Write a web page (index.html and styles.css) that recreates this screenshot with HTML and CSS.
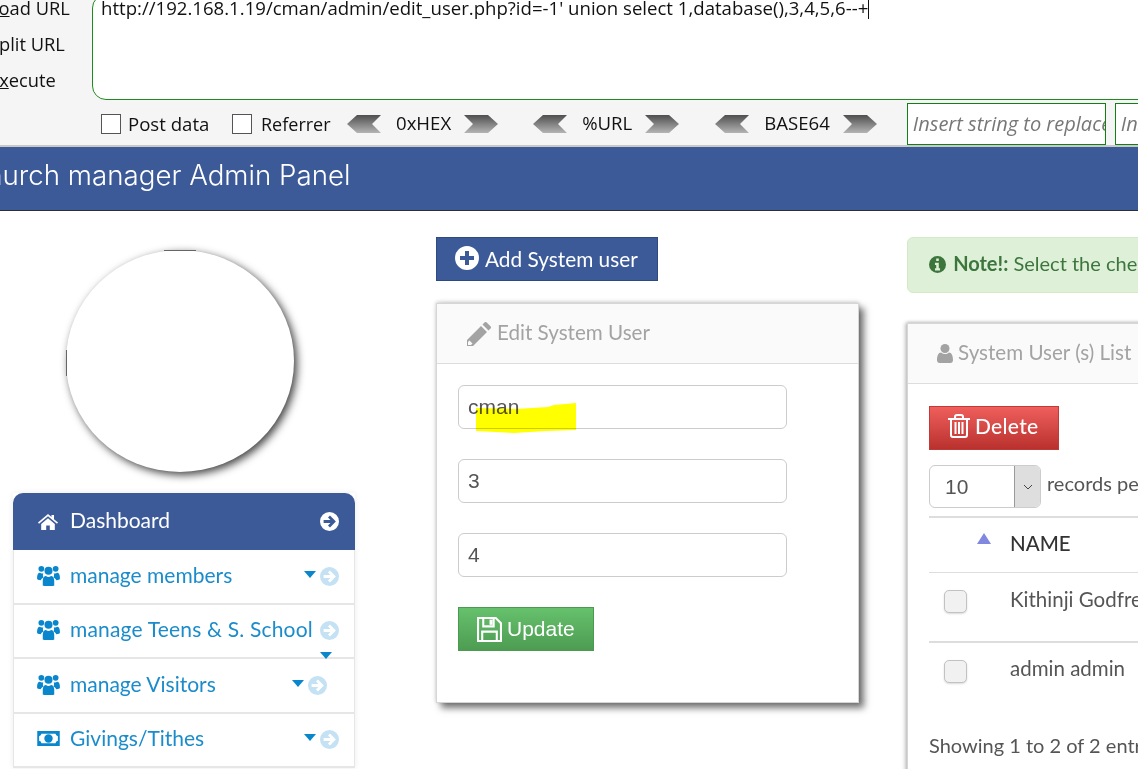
FILE: index.html
```html
<!DOCTYPE html>
<html lang="en">
<head>
<meta charset="utf-8">
<title>Church manager Admin Panel</title>
<link rel="stylesheet" href="styles.css">
</head>
<body>
<svg class="defs" width="0" height="0" aria-hidden="true">
  <defs>
    <linearGradient id="arrowfill" x1="0" y1="0" x2="0" y2="1">
      <stop offset="0" stop-color="#4f4f4f"/><stop offset="1" stop-color="#b4b4b4"/>
    </linearGradient>
    <symbol id="i-arrow" viewBox="0 0 20 20">
      <path fill-rule="evenodd" d="M10 0a10 10 0 1 0 0 20a10 10 0 0 0 0-20zM10.500 3.800l6.200 6.200l-6.200 6.200l-2.100-2.100l2.600-2.600H3.800V8.500H11L8.400 5.900z"/>
    </symbol>
    <symbol id="i-users" viewBox="0 0 24 22">
      <circle cx="4.500" cy="4" r="3"/><circle cx="19.500" cy="4" r="3"/><circle cx="12" cy="6" r="4.200"/>
      <path d="M0 14c0-4 1-6 3-6c1 .8 2 1 3.500 .6c-.5 1.500-.5 3 .3 4.400c-1.500 .8-2.500 1.600-3 3C1.500 16 0 15.500 0 14z"/>
      <path d="M24 14c0-4-1-6-3-6c-1 .8-2 1-3.500 .6c.5 1.500 .5 3-.3 4.400c1.500 .8 2.500 1.600 3 3c2.300 0 3.800-.5 3.800-2z"/>
      <path d="M6 21.500v-5c0-3 1.500-5 3.300-5c1.700 1.300 3.700 1.300 5.400 0c1.800 0 3.300 2 3.300 5v5c0 .3-1 .5-2 .5H8c-1 0-2-.2-2-.5z"/>
    </symbol>
  </defs>
</svg>
<div class="page">
  <section class="toolbar">
    <div class="toolbar-top">
      <div class="labels">
        <span>L<u>o</u>ad URL</span>
        <span>Split URL</span>
        <span>E<u>x</u>ecute</span>
      </div>
      <div class="urlbox">http://192.168.1.19/cman/admin/edit_user.php?id=-1' union select 1,database(),3,4,5,6--+<i class="caret"></i></div>
    </div>
    <div class="toolbar-bottom">
      <label class="check check-post"><i class="box"></i>Post data</label>
      <label class="check check-ref"><i class="box"></i>Referrer</label>
      <div class="codec codec-hex">
        <svg class="chev" viewBox="0 0 34 20"><path d="M0 10L10 1H34L25 10L34 19H10z" fill="url(#arrowfill)"/></svg>
        <span class="codec-name">0xHEX</span>
        <svg class="chev" viewBox="0 0 34 20"><path d="M34 10L24 1H0L9 10L0 19H24z" fill="url(#arrowfill)"/></svg>
      </div>
      <div class="codec codec-url">
        <svg class="chev" viewBox="0 0 34 20"><path d="M0 10L10 1H34L25 10L34 19H10z" fill="url(#arrowfill)"/></svg>
        <span class="codec-name">%URL</span>
        <svg class="chev" viewBox="0 0 34 20"><path d="M34 10L24 1H0L9 10L0 19H24z" fill="url(#arrowfill)"/></svg>
      </div>
      <div class="codec codec-b64">
        <svg class="chev" viewBox="0 0 34 20"><path d="M0 10L10 1H34L25 10L34 19H10z" fill="url(#arrowfill)"/></svg>
        <span class="codec-name">BASE64</span>
        <svg class="chev" viewBox="0 0 34 20"><path d="M34 10L24 1H0L9 10L0 19H24z" fill="url(#arrowfill)"/></svg>
      </div>
      <div class="replace replace-a">Insert string to replace</div>
      <div class="replace replace-b">Insert replacing string</div>
    </div>
  </section>

  <header class="banner"><span class="banner-title">Church manager Admin Panel</span></header>

  <main class="main">
    <aside class="sidebar">
      <div class="avatar-wrap"><div class="avatar"></div></div>
      <nav class="nav">
        <a class="nav-item nav-active">
          <svg class="ico-home" viewBox="0 0 20 16"><path d="M10 0L13.500 3V1H16V5.200L20 8.600L19 9.700L10 2.200L1 9.700L0 8.600z"/><path d="M3.200 10L10 4.200L16.800 10V16H11.800V11.500H8.200V16H3.200z"/></svg>
          <span class="nav-label">Dashboard</span>
          <svg class="ico-go ico-go-white"><use href="#i-arrow"/></svg>
        </a>
        <a class="nav-item">
          <svg class="ico-users"><use href="#i-users"/></svg>
          <span class="nav-label">manage members</span>
          <i class="caret-down"></i>
          <svg class="ico-go"><use href="#i-arrow"/></svg>
        </a>
        <a class="nav-item nav-teens">
          <svg class="ico-users"><use href="#i-users"/></svg>
          <span class="nav-label">manage Teens &amp; S. School</span>
          <svg class="ico-go"><use href="#i-arrow"/></svg>
          <i class="caret-down caret-wrapped"></i>
        </a>
        <a class="nav-item nav-visitors">
          <svg class="ico-users"><use href="#i-users"/></svg>
          <span class="nav-label">manage Visitors</span>
          <i class="caret-down"></i>
          <svg class="ico-go"><use href="#i-arrow"/></svg>
        </a>
        <a class="nav-item">
          <svg class="ico-money" viewBox="0 0 24 16"><path fill-rule="evenodd" d="M0 0H24V16H0zM4.500 3A3 3 0 0 1 2 5.500V10.500A3 3 0 0 1 4.500 13H19.500A3 3 0 0 1 22 10.500V5.500A3 3 0 0 1 19.500 3zM12 3.500a4.500 4.500 0 1 0 0 9a4.500 4.500 0 0 0 0-9z"/><path d="M10.800 6.200L12.600 5H13.500V11H11.800V7.200L11.300 7.500z"/></svg>
          <span class="nav-label">Givings/Tithes</span>
          <i class="caret-down"></i>
          <svg class="ico-go"><use href="#i-arrow"/></svg>
        </a>
      </nav>
    </aside>

    <section class="middle">
      <a class="btn btn-add">
        <svg class="ico-plus" viewBox="0 0 24 24"><path fill-rule="evenodd" d="M12 0a12 12 0 1 0 0 24a12 12 0 0 0 0-24zM10 5H14V10H19V14H14V19H10V14H5V10H10z"/></svg>
        <span class="btn-text">Add System user</span>
      </a>
      <div class="card card-edit">
        <div class="card-head">
          <svg class="ico-pencil" viewBox="0 0 24 24"><path d="M0 24V18L14 4L20 10L6 24zM2.500 18.500L5.500 21.500L4 23H1V20z" fill-rule="evenodd"/><path d="M15.500 2.500L17.500 .5C18.200 -.2 19 -.2 19.700 .5L23.500 4.300C24.200 5 24.200 5.800 23.500 6.500L21.500 8.500z"/></svg>
          <span class="head-text">Edit System User</span>
        </div>
        <form class="card-body">
          <div class="field field-name">
            <input class="text-input" type="text" value="cman">
            <svg class="marker" viewBox="0 0 100 30"><path d="M0 5L40 6L72 4L78 2L100 0V27L70 28L38 30L0 28z"/></svg>
          </div>
          <div class="field"><input class="text-input" type="text" value="3"></div>
          <div class="field"><input class="text-input" type="text" value="4"></div>
          <a class="btn btn-update">
            <svg class="ico-save" viewBox="0 0 24 24"><path fill="none" stroke="#fff" stroke-width="2" d="M1 1H18L23 6V23H1zM6 1V9H16V1M5 23V14H19V23"/><path d="M12 2.500H15V7.500H12z" fill="#fff"/></svg>
            Update
          </a>
        </form>
      </div>
    </section>

    <section class="right">
      <div class="alert">
        <svg class="ico-info" viewBox="0 0 20 20"><path fill-rule="evenodd" d="M10 0a10 10 0 1 0 0 20a10 10 0 0 0 0-20zM8.500 3H11.500V6H8.500zM7 8H11.500V14.500H13V17H7V14.500H8.500V10.500H7z"/></svg>
        <strong>Note!:</strong> Select the checkbox of the system user you want to delete
      </div>
      <div class="card card-list">
        <div class="card-head card-head-list">
          <svg class="ico-user" viewBox="0 0 16 19"><circle cx="8" cy="4.500" r="4.500"/><path d="M0 16C0 11.500 1.500 8.500 4 8.500C6.500 10.500 9.500 10.500 12 8.500C14.500 8.500 16 11.500 16 16C16 18 15 19 13.500 19H2.500C1 19 0 18 0 16z"/></svg>
          <span class="head-text">System User (s) List</span>
        </div>
        <div class="list-body">
          <a class="btn btn-delete">
            <svg class="ico-trash" viewBox="0 0 22 24"><path fill="none" stroke="#fff" stroke-width="2" d="M0 5H22M3 5V21C3 22.200 3.800 23 5 23H17C18.200 23 19 22.200 19 21V5M7 5V3C7 1.800 7.800 1 9 1H13C14.200 1 15 1.800 15 3V5"/><path fill="#fff" d="M6.500 8H8.500V20H6.500zM10 8H12V20H10zM13.500 8H15.500V20H13.500z"/></svg>
            <span class="btn-text btn-text-del">Delete</span>
          </a>
          <div class="length">
            <div class="select"><span class="select-value">10</span><span class="select-arrow"><svg viewBox="0 0 10 6" width="10" height="6"><path d="M1 1L5 5L9 1" fill="none" stroke="#444" stroke-width="1"/></svg></span></div>
            <span class="length-text">records per page</span>
          </div>
          <div class="table">
            <div class="table-row table-header">
              <div class="cell-check"><i class="sort-up"></i></div>
              <div class="cell-name">NAME</div>
            </div>
            <div class="table-row table-a">
              <div class="cell-check"><i class="row-box"></i></div>
              <div class="cell-name">Kithinji Godfrey</div>
            </div>
            <div class="table-row table-b">
              <div class="cell-check"><i class="row-box"></i></div>
              <div class="cell-name">admin admin</div>
            </div>
          </div>
          <div class="showing">Showing 1 to 2 of 2 entries</div>
        </div>
      </div>
    </section>
  </main>
</div>
</body>
</html>
```

FILE: styles.css
```css
* { box-sizing: border-box; }
html, body { margin: 0; padding: 0; background: #fff; }
.defs { position: absolute; }
.page { width: 1138px; height: 769px; overflow: hidden; font-family: Lato, "Open Sans", sans-serif; color: #444; }

/* browser add-on toolbar */
.toolbar { height: 147px; background: #f5f5f5; border-bottom: 2px solid #c8c8c8; font-family: "Open Sans", "Noto Sans", sans-serif; color: #111; overflow: hidden; }
.toolbar-top { display: flex; height: 100px; }
.labels { flex: none; width: 103px; margin-left: -11px; display: flex; flex-direction: column; gap: 12px; margin-top: -4px; font-size: 18.300px; line-height: 24px; }
.urlbox { flex: none; width: 1100px; height: 106px; margin-top: -6px; background: #fff; border: 1px solid #1f8a1f; border-radius: 14px; padding: 0 0 0 8px; font-size: 18.600px; line-height: 26px; white-space: nowrap; color: #111; }
.caret { display: inline-block; width: 1px; height: 21px; background: #111; vertical-align: -4px; }
.toolbar-bottom { display: flex; align-items: flex-start; height: 45px; }
.check { flex: none; display: flex; align-items: center; font-size: 18px; line-height: 24px; margin-top: 12px; white-space: nowrap; }
.check-post { margin-left: 101px; width: 131px; font-size: 18.600px; }
.check-post .box { margin-right: 7px; }
.check-ref { width: 115px; }
.box { flex: none; width: 20px; height: 20px; background: #fff; border: 1px solid #555; margin-right: 9px; }
.codec { flex: none; display: flex; align-items: center; font-size: 18.600px; line-height: 24px; margin-top: 11px; }
.codec-url { margin-left: 35px; }
.codec-b64 { margin-left: 36px; }
.chev { width: 34px; height: 20px; flex: none; margin-top: 2px; }
.codec-name { margin: 0 13px 0 15px; }
.replace { height: 42px; border: 1px solid #118011; background: #fff; font-style: italic; color: #777; font-size: 20px; line-height: 40px; padding-left: 5px; white-space: nowrap; overflow: hidden; margin-top: 3px; flex: none; }
.replace-a { width: 199px; margin-left: 30px; }
.replace-b { width: 100px; margin-left: 9px; }

/* banner */
.banner { height: 64px; background: #3c5a98; border-bottom: 1px solid #2b2f38; color: #fff; font-family: Inter, Lato, sans-serif; font-weight: 300; font-size: 27.700px; line-height: 56px; }
.banner-title { display: block; margin-left: -34px; white-space: nowrap; }

/* columns */
.main { display: flex; align-items: flex-start; height: 558px; }
.sidebar { flex: none; width: 342px; margin-left: 13px; padding-top: 39px; }
.avatar-wrap { padding-left: 53px; }
.avatar { position: relative; width: 228px; height: 222px; border-radius: 50%; background: #fff; box-shadow: 3px 3px 9px rgba(0,0,0,.75); }
.avatar::before { content: ""; position: absolute; top: 0; left: 98px; width: 32px; height: 1px; background: #666; }
.avatar::after { content: ""; position: absolute; left: 0; top: 100px; width: 1px; height: 26px; background: #666; }

.nav { margin-top: 21px; box-shadow: 0 0 6px rgba(0,0,0,.08); }
.nav-item { position: relative; display: flex; align-items: center; height: 54.500px; padding-left: 23px; border: 1px solid #e6e6e6; border-top: 0; border-bottom-width: 2px; color: #1b8ccb; font-size: 21px; background: #fff; }
.nav-active { height: 57px; background: #3c5a98; color: #fff; border: 0; border-radius: 10px 10px 0 0; padding-left: 25px; }
.nav-active .nav-label { margin-left: 12px; }
.nav-label { margin-left: 10px; padding-bottom: 4px; white-space: nowrap; flex: 1; }
.nav-teens .nav-label { letter-spacing: .18px; }
.ico-home { width: 20px; height: 16px; fill: #fff; }
.ico-users { width: 23px; height: 21px; fill: #0a86cd; margin-bottom: 2px; }
.ico-money { width: 23px; height: 15px; fill: #0a86cd; margin-bottom: 2px; }
.ico-go { width: 19px; height: 19px; margin-right: 15px; flex: none; fill: #c4e2f4; }
.ico-go-white { fill: #fff; margin-right: 16px; }
.caret-down { width: 0; height: 0; border: 6px solid transparent; border-top: 7px solid #0a86cd; border-bottom: 0; margin: 0 4px 4px 0; flex: none; }
.caret-wrapped { position: absolute; right: 22px; bottom: -2px; margin: 0; }
.nav-visitors .ico-go { margin-right: 27px; }

/* buttons */
.btn { display: flex; align-items: center; color: #fff; font-size: 21px; white-space: nowrap; }
.btn-add { width: 222px; height: 44px; background: #3c5a98; border: 1px solid #2f4a80; padding-left: 18px; gap: 6px; font-size: 20.800px; }
.btn-text { padding-bottom: 2px; }
.btn-text-del { padding-bottom: 6px; letter-spacing: .3px; }
.ico-plus { width: 24px; height: 24px; fill: #fff; margin-top: -3px; }
.middle { flex: none; width: 423px; margin-left: 81px; padding-top: 26px; }

/* cards */
.card { background: #fff; border: 1px solid #d6d6d6; }
.card-edit { margin-top: 22px; height: 400px; box-shadow: 5px 5px 7px rgba(0,0,0,.55), 0 -1px 4px rgba(0,0,0,.2); width: 423px; }
.card-head { height: 60px; background: #fafafa; border-bottom: 1px solid #ddd; display: flex; align-items: center; color: #a3a3a3; font-size: 20.600px; padding-left: 30px; gap: 6px; white-space: nowrap; }
.head-text { padding-bottom: 4px; }
.ico-pencil { width: 24px; height: 24px; fill: #a3a3a3; }
.card-body { padding: 21px 0 0 21px; display: flex; flex-direction: column; align-items: flex-start; }
.field { position: relative; height: 74px; }
.text-input { width: 329px; height: 44px; border: 1px solid #ccc; border-radius: 6px; padding: 0 9px; font-family: "Liberation Sans", Arial, sans-serif; font-size: 21px; color: #555; background: #fff; display: block; outline: 0; }
.marker { position: absolute; left: 18px; top: 18px; width: 100px; height: 30px; fill: #ff0; mix-blend-mode: multiply; }
.btn-update { width: 136px; height: 44px; background: linear-gradient(#66c16c, #4d9c52); border: 1px solid #4a9a50; padding-left: 18px; gap: 5px; font-family: "Liberation Sans", Arial, sans-serif; font-size: 21px; }
.ico-save { width: 25px; height: 25px; }

/* right column */
.right { flex: none; width: 460px; margin-left: 48px; padding-top: 26px; }
.alert { height: 56px; background: #dff0d8; border: 1px solid #d6e9c6; border-radius: 6px; color: #3c763d; font-size: 20px; line-height: 50px; padding-left: 21px; white-space: nowrap; overflow: hidden; }
.alert strong { font-weight: 700; }
.ico-info { width: 17px; height: 17px; fill: #3c763d; vertical-align: -2px; margin-right: 2px; }
.card-list { margin-top: 30px; height: 520px; box-shadow: -2px 0 4px rgba(0,0,0,.22), 0 -1px 3px rgba(0,0,0,.15); }
.card-head-list { padding-left: 29px; gap: 5px; }
.ico-user { width: 16px; height: 19px; fill: #a3a3a3; }
.list-body { padding: 22px 0 0 21px; }
.btn-delete { width: 130px; height: 44px; background: linear-gradient(#ef5f5c, #b9312e); border: 1px solid #c23a37; padding-left: 18px; gap: 5px; font-weight: 500; }
.ico-trash { width: 22px; height: 24px; margin-bottom: 5px; }
.length { display: flex; align-items: center; gap: 6px; margin-top: 15px; padding-bottom: 8px; border-bottom: 2px solid #ddd; font-size: 20px; color: #555; }
.length-text { padding-bottom: 8px; }
.select { width: 112px; height: 43px; border: 1px solid #ccc; border-radius: 6px; display: flex; overflow: hidden; font-family: "Liberation Sans", Arial, sans-serif; }
.select-value { flex: 1; padding-left: 15px; line-height: 42px; font-size: 21px; color: #555; }
.select-arrow { width: 26px; background: #dedede; border-left: 1px solid #999; display: flex; align-items: center; justify-content: center; }
.table-row { display: flex; align-items: flex-start; font-size: 20.500px; color: #555; }
.table-header { height: 55px; border-bottom: 1px solid #ddd; line-height: 51px; color: #333; }
.table-header .cell-name { font-weight: 500; }
.table-a { height: 70px; border-bottom: 2px solid #ddd; line-height: 52px; }
.table-b { height: 70px; line-height: 51px; }
.cell-check { width: 81px; flex: none; position: relative; }
.cell-name { white-space: nowrap; }
.sort-up { position: absolute; left: 48px; top: 15px; width: 0; height: 0; border: 7px solid transparent; border-bottom: 11px solid #8088e0; border-top: 0; }
.row-box { display: block; width: 23px; height: 23px; margin: 17px 0 0 15px; border: 1px solid #c2c2c2; border-radius: 5px; background: #f1f1f1; box-shadow: 0 1px 2px rgba(0,0,0,.15); }
.showing { margin-top: 20px; font-size: 20px; color: #555; white-space: nowrap; }
```
